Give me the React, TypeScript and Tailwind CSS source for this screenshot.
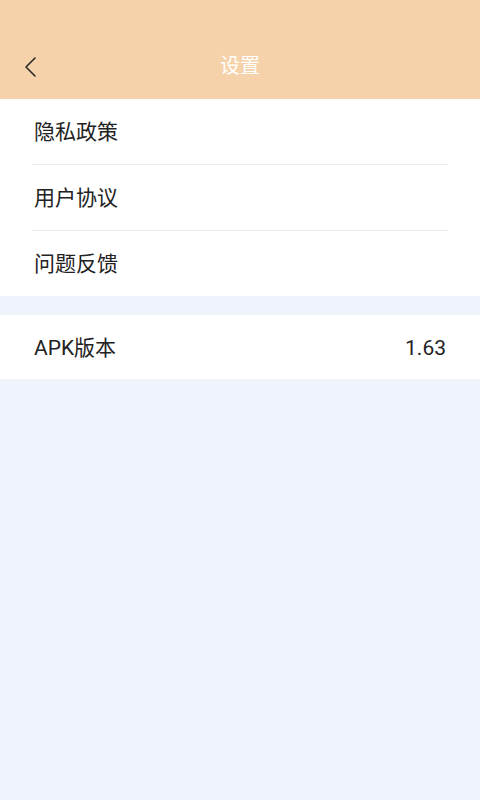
const font = { fontFamily: 'Roboto, "Noto Sans CJK SC", sans-serif' };

const Row = ({ label, value, last }: { label: string; value?: string; last?: boolean }) => (
  <div className={`flex items-center justify-between bg-white px-[34px] pt-[3px] ${last ? "h-[64px]" : "h-[65px]"}`}>
    <span className="text-[21px] text-[#222]">{label}</span>
    {value && <span className="text-[21px] text-[#222]">{value}</span>}
  </div>
);

const Divider = () => (
  <div className="bg-white px-[32px]">
    <div className="h-px bg-[#ececec]" />
  </div>
);

export default function App() {
  return (
    <div className="flex min-h-[800px] w-[480px] flex-col bg-[#eff4fc]" style={font}>
      {/* Header */}
      <div className="bg-[#f6d2aa]">
        <div className="h-[36px]" />
        <div className="relative flex h-[63px] items-center justify-center pb-[3px]">
          <svg className="absolute left-[22px] top-[19px]" width="18" height="24" viewBox="0 0 18 24" fill="none">
            <path d="M13 3 L4 12 L13 21" stroke="#2a2a2a" strokeWidth="1.6" strokeLinecap="round" strokeLinejoin="round" />
          </svg>
          <span className="text-[20px] text-white">设置</span>
        </div>
      </div>

      {/* List */}
      <Row label="隐私政策" />
      <Divider />
      <Row label="用户协议" />
      <Divider />
      <Row label="问题反馈" />
      <div className="h-[19px]" />
      <Row label="APK版本" value="1.63" last />
    </div>
  );
}
